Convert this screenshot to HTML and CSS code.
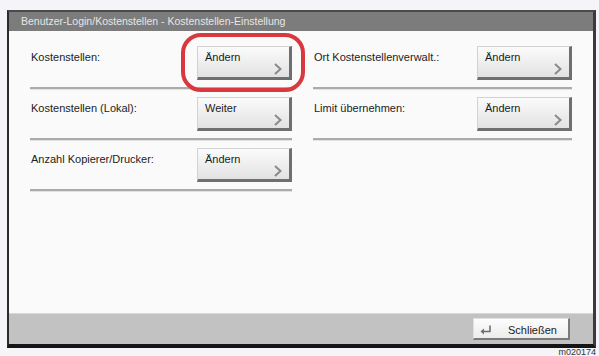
FILE: index.html
```html
<!DOCTYPE html>
<html lang="de">
<head>
<meta charset="UTF-8">
<meta name="viewport" content="width=device-width, initial-scale=1.0">
<title>Kostenstellen-Einstellung</title>
<link rel="stylesheet" href="styles.css">
</head>
<body>
<div class="panel">
    <div class="title-bar">Benutzer-Login/Kostenstellen - Kostenstellen-Einstellung</div>
    <div class="content">
        <div class="column">
            <div class="row">
                <span class="label">Kostenstellen:</span>
                <div class="btn-wrap">
                    <button class="key">Ändern<svg class="chev" width="8" height="12" viewBox="0 0 8 12"><path d="M1 1 L6.5 6 L1 11" fill="none" stroke="#8a8a8a" stroke-width="2"/></svg></button>
                    <div class="ring"></div>
                </div>
            </div>
            <div class="row">
                <span class="label">Kostenstellen (Lokal):</span>
                <button class="key">Weiter<svg class="chev" width="8" height="12" viewBox="0 0 8 12"><path d="M1 1 L6.5 6 L1 11" fill="none" stroke="#8a8a8a" stroke-width="2"/></svg></button>
            </div>
            <div class="row">
                <span class="label">Anzahl Kopierer/Drucker:</span>
                <button class="key">Ändern<svg class="chev" width="8" height="12" viewBox="0 0 8 12"><path d="M1 1 L6.5 6 L1 11" fill="none" stroke="#8a8a8a" stroke-width="2"/></svg></button>
            </div>
        </div>
        <div class="column">
            <div class="row">
                <span class="label">Ort Kostenstellenverwalt.:</span>
                <button class="key">Ändern<svg class="chev" width="8" height="12" viewBox="0 0 8 12"><path d="M1 1 L6.5 6 L1 11" fill="none" stroke="#8a8a8a" stroke-width="2"/></svg></button>
            </div>
            <div class="row">
                <span class="label">Limit übernehmen:</span>
                <button class="key">Ändern<svg class="chev" width="8" height="12" viewBox="0 0 8 12"><path d="M1 1 L6.5 6 L1 11" fill="none" stroke="#8a8a8a" stroke-width="2"/></svg></button>
            </div>
        </div>
    </div>
    <div class="footer">
        <button class="close-btn">
            <svg width="12" height="10" viewBox="0 0 12 10"><path d="M10 0.5 V6.5 H3" fill="none" stroke="#6e6e6e" stroke-width="1.6"/><path d="M0.5 6.5 L4 3.5 V9.5 Z" fill="#6e6e6e"/></svg>
            <span>Schließen</span>
        </button>
    </div>
</div>
<div class="caption">m020174</div>
</body>
</html>
```

FILE: styles.css
```css
body {
    margin: 0;
    font-family: "Liberation Sans", Arial, sans-serif;
    background-color: #f4f4f9;
    color: #222;
    height: 356px;
    overflow: hidden;
}
.panel {
    margin: 10px 0 0 7px;
    width: 584px;
    border-left: 2px solid #2a2a2a;
    border-right: 3px solid #3a3a3a;
    border-top: 2px solid #4a4a4a;
    border-bottom: 4px solid #151515;
    display: flex;
    flex-direction: column;
}
.title-bar {
    height: 19px;
    background-color: #7c7c7c;
    color: #e6e6e6;
    font-size: 10.5px;
    line-height: 19px;
    padding-left: 12px;
    white-space: nowrap;
}
.content {
    height: 282px;
    background-color: #fafafa;
    display: grid;
    grid-template-columns: 262px 259px;
    column-gap: 21px;
    padding: 15px 21px 0 21px;
    box-sizing: border-box;
}
.column {
    display: flex;
    flex-direction: column;
}
.row {
    display: flex;
    justify-content: space-between;
    padding-bottom: 7px;
    margin-bottom: 8px;
    border-bottom: 2px solid #ababab;
    box-shadow: 0 1px 0 #e2e2e2;
}
.label {
    font-size: 11px;
    padding: 5px 0 0 1px;
}
.btn-wrap {
    position: relative;
    display: flex;
}
.key {
    width: 95px;
    height: 34px;
    box-sizing: border-box;
    display: flex;
    flex-direction: column;
    align-items: flex-start;
    padding: 4px 7px 2px 7px;
    font-family: inherit;
    font-size: 11px;
    color: #1a1a1a;
    background: linear-gradient(#fbfbfb, #e2e2e2);
    border-top: 1px solid #d2d2d2;
    border-left: 1px solid #d2d2d2;
    border-right: 3px solid #6f6f6f;
    border-bottom: 3px solid #6f6f6f;
    cursor: pointer;
}
.chev {
    align-self: flex-end;
    margin-top: auto;
}
.ring {
    position: absolute;
    left: -16px;
    top: -13px;
    right: -13px;
    bottom: -12px;
    border: 4px solid #d8393f;
    border-radius: 20px;
}
.footer {
    height: 31px;
    background-color: #c2c2c2;
    border-top: 1px solid #d8d8d8;
    box-sizing: border-box;
    display: flex;
    justify-content: flex-end;
    align-items: center;
    padding-right: 23px;
}
.close-btn {
    width: 97px;
    height: 22px;
    box-sizing: border-box;
    display: flex;
    align-items: center;
    gap: 16px;
    padding: 2px 0 0 6px;
    font-family: inherit;
    font-size: 11px;
    color: #1a1a1a;
    background: linear-gradient(#fdfdfd, #ececec);
    border-top: 1px solid #e0e0e0;
    border-left: 1px solid #e0e0e0;
    border-right: 2px solid #7a7a7a;
    border-bottom: 2px solid #7a7a7a;
    cursor: pointer;
}
.caption {
    text-align: right;
    font-size: 9px;
    color: #333;
    padding-right: 3px;
    line-height: 9px;
}
```
